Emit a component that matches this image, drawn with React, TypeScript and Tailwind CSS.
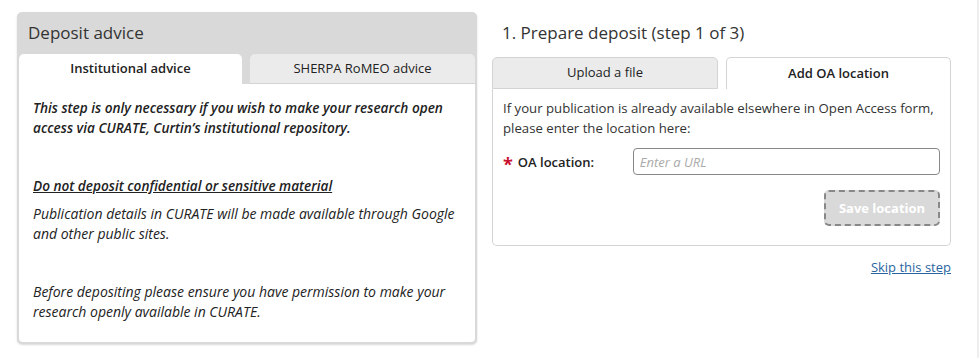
const font = { fontFamily: '"Open Sans", "Liberation Sans", sans-serif' };

function AdvicePanel() {
  return (
    <div className="w-[460px] rounded-[5px] bg-[#d9d9d9] px-[2px] pb-[2px] shadow-[0_1px_2px_rgba(0,0,0,0.15)]">
      <h2 className="h-[42px] px-[9px] pt-[9px] text-[17px] leading-[24px] text-[#333]">Deposit advice</h2>
      <div className="flex gap-[8px]">
        <div className="flex h-[30px] w-[223px] items-center justify-center rounded-t-[5px] bg-white text-[13px] font-semibold text-[#222]">
          Institutional advice
        </div>
        <div className="flex h-[30px] flex-1 items-center justify-center rounded-t-[5px] border-b border-[#d4d4d4] bg-[#ebebeb] text-[13px] text-[#222]">
          SHERPA RoMEO advice
        </div>
      </div>
      <div className="h-[258px] rounded-b-[4px] bg-white px-[14px] pt-[14px] text-[14px] italic leading-[20px] text-[#222]">
        <p className="text-[13.6px] font-semibold">
          This step is only necessary if you wish to make your research open access via CURATE, Curtin’s institutional
          repository.
        </p>
        <p className="mt-[38px] text-[13.6px] font-semibold underline">Do not deposit confidential or sensitive material</p>
        <p className="mt-[8px]">Publication details in CURATE will be made available through Google and other public sites.</p>
        <p className="mt-[38px]">Before depositing please ensure you have permission to make your research openly available in CURATE.</p>
      </div>
    </div>
  );
}

function DepositPanel() {
  return (
    <div className="w-[459px]">
      <h2 className="h-[45px] px-[10px] pt-[9px] text-[17px] leading-[24px] text-[#333]">1. Prepare deposit (step 1 of 3)</h2>
      <div className="flex gap-[8px]">
        <div className="flex h-[32px] w-[226px] items-center justify-center rounded-t-[5px] border border-[#d4d4d4] bg-[#ebebeb] text-[13px] text-[#222]">
          Upload a file
        </div>
        <div className="flex h-[32px] flex-1 items-center justify-center rounded-t-[5px] border border-b-0 border-[#d4d4d4] bg-white text-[13px] font-semibold text-[#222]">
          Add OA location
        </div>
      </div>
      <div className="h-[157px] rounded-b-[5px] border border-t-0 border-[#d4d4d4] px-[10px] pt-[9px] text-[13.2px] leading-[20px] text-[#333]">
        <p>If your publication is already available elsewhere in Open Access form, please enter the location here:</p>
        <div className="mt-[10px] flex items-center">
          <label className="flex w-[130px] items-center gap-[5px] text-[13px] font-semibold text-[#222]">
            <span className="mt-[5px] text-[18px] font-bold leading-none text-[#c8102e]">*</span>
            OA location:
          </label>
          <input
            placeholder="Enter a URL"
            className="h-[27px] w-[308px] rounded-[4px] border border-[#888] px-[6px] text-[13px] italic outline-none placeholder:text-[#aaa]"
            style={font}
          />
        </div>
        <div className="mt-[15px] flex justify-end">
          <button
            className="h-[36px] w-[116px] rounded-[5px] border-2 border-dashed border-[#888] bg-[#d9d9d9] text-[13px] font-bold text-white"
            style={font}
          >
            Save location
          </button>
        </div>
      </div>
      <div className="mt-[12px] flex justify-end">
        <a href="#" className="text-[13px] leading-[18px] text-[#2a65a0] underline">
          Skip this step
        </a>
      </div>
    </div>
  );
}

export default function App() {
  return (
    <div className="flex h-[358px] w-[979px] bg-white" style={font}>
      <div className="flex flex-1 items-start gap-[15px] pl-[17px] pt-[12px]">
        <AdvicePanel />
        <DepositPanel />
      </div>
      <div className="w-[2px] bg-[#eeeeee]" />
    </div>
  );
}
